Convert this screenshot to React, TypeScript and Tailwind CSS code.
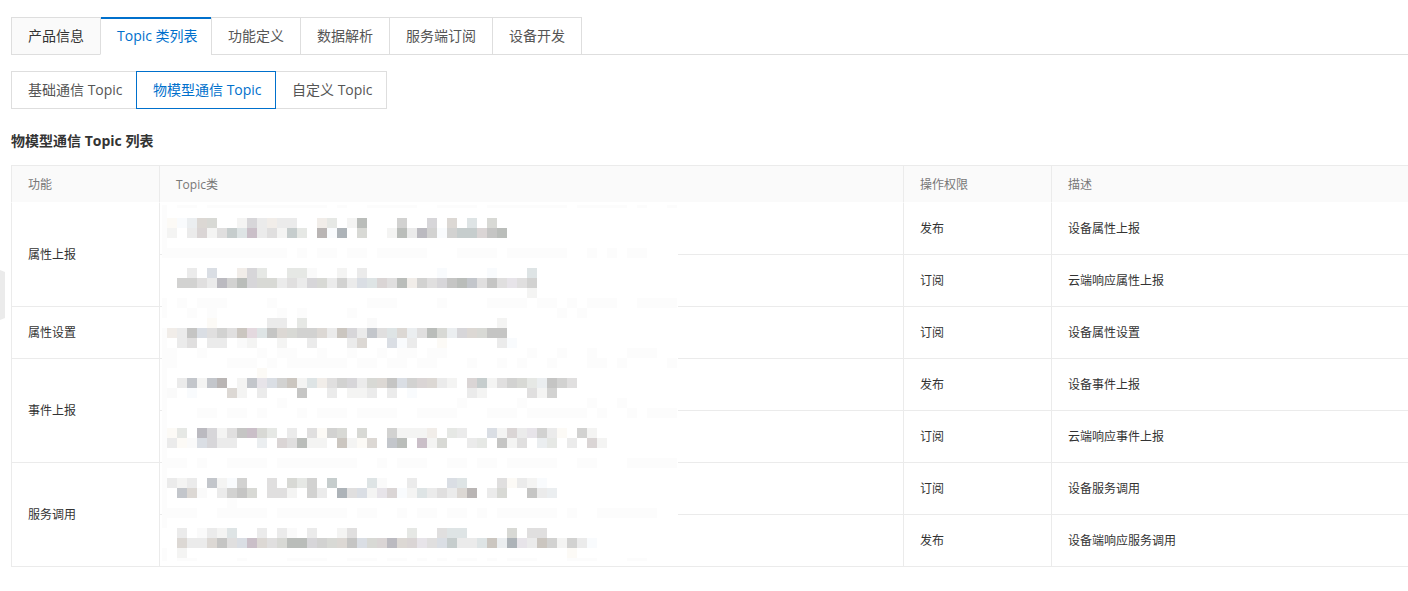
import clsx from "clsx";

const TABS = [
  { label: "产品信息", width: "w-[90px]" },
  { label: "Topic 类列表", width: "w-[110px]" },
  { label: "功能定义", width: "w-[89px]" },
  { label: "数据解析", width: "w-[89px]" },
  { label: "服务端订阅", width: "w-[103px]" },
  { label: "设备开发", width: "w-[90px]" },
];

const SUB_TABS = [
  { label: "基础通信 Topic", width: "w-[125px]" },
  { label: "物模型通信 Topic", width: "w-[140px]" },
  { label: "自定义 Topic", width: "w-[111px]" },
];

type Topic = { perm: string; desc: string };

const GROUPS: { name: string; topics: Topic[] }[] = [
  {
    name: "属性上报",
    topics: [
      { perm: "发布", desc: "设备属性上报" },
      { perm: "订阅", desc: "云端响应属性上报" },
    ],
  },
  { name: "属性设置", topics: [{ perm: "订阅", desc: "设备属性设置" }] },
  {
    name: "事件上报",
    topics: [
      { perm: "发布", desc: "设备事件上报" },
      { perm: "订阅", desc: "云端响应事件上报" },
    ],
  },
  {
    name: "服务调用",
    topics: [
      { perm: "订阅", desc: "设备服务调用" },
      { perm: "发布", desc: "设备端响应服务调用" },
    ],
  },
];

const PALETTE: Record<string, string> = {
  "1": "#fafafa",
  "2": "#f4f4f3",
  "3": "#ebebeb",
  "4": "#e0dfdf",
  "5": "#d2d2d1",
  "6": "#c5c5c4",
  "7": "#b9b5b4",
  b: "#ebeef0",
  n: "#fcfaf6",
  z: "#f9fbfd",
  W: "#f1ede9",
  w: "#dcd8d4",
  k: "#cbc6c0",
  G: "#e6e8e5",
  g: "#d8d9d5",
  h: "#babdba",
  T: "#dee4e5",
  t: "#c6cdcd",
  B: "#dadee4",
  u: "#c3c6cb",
  U: "#adb3b8",
  P: "#e7e4e9",
  p: "#d7d6d9",
  q: "#cabfc8",
  v: "#bbbac0",
  R: "#dad5d5",
  m: "#e4d9df",
};

// [row, cells], one character per 10px cell
const CELLS: [number, string][] = [
  [2, "nzbwg..2p3W33..WG.2h...5..p.w.T.g"],
  [3, "2.3R24tTq342tG.7zU.g..2h3v5z5ttR6h"],
  [7, "..3.B..WpG..GG1..2.3.......z....z...T"],
  [8, ".5543v5hpgg343pg353BTR4hW54p6hu464P45"],
  [9, "....................................2"],
  [12, "....n.....33.G......1............2"],
  [13, "W36B454kmT6wg55w3kp3u4Twb4hgbpwg66"],
  [14, ".34.33.12..2..3...3w..Bz3..n.....3z"],
  [17, ".........n"],
  [18, ".3u2u7.2uPB5k2TW45p3gw6B5Rw32.Rt245gGb654"],
  [19, "1.z...w2.3...6..3.223.3.z.....32....425"],
  [23, "nG.vp246qgG.3.4n5g.g..5222W.G3..B2R3P53n.52"],
  [24, "3n1Bp33..b.R4h22.k2nw.uh.q2g..3G.624.bG.3.R2"],
  [28, "323.u2z5..4.gG5.t...T1..3...BT...4n32z"],
  [29, ".uw1.356g.442.53.U4B2PRz2T343w7.3g..63b"],
  [33, ".3.132T..3.31.3..24.....G..4TT....g.44"],
  [34, ".w33w64Bqw4ghhp5gw6BgRvwRP4Bt33TkbUP3k5253z"],
  [35, ".2......................................n"],
];

// [row, runs], each run is first and last cell
const FAINT: [number, [number, number][]][] = [
  [0, [[1, 2], [4, 15], [17, 17], [20, 24], [27, 30], [32, 39], [41, 45], [47, 47], [50, 50]]],
  [5, [[0, 11], [13, 13], [15, 16], [18, 19], [21, 25], [29, 32], [34, 39], [42, 42], [44, 44], [46, 47]]],
  [10, [[1, 1], [3, 5], [10, 10], [20, 22], [27, 27], [32, 35], [37, 38], [40, 40], [42, 44], [47, 50]]],
  [11, [[2, 2], [4, 4], [11, 11], [13, 13], [18, 18], [39, 39], [41, 41]]],
  [15, [[0, 0], [3, 3], [9, 9], [11, 12], [15, 15], [18, 18], [21, 21], [23, 24], [26, 27], [36, 36], [39, 39], [42, 42], [46, 48]]],
  [16, [[0, 0], [6, 8], [10, 10], [12, 17], [19, 20], [22, 23], [25, 26], [30, 30], [33, 33], [35, 35], [38, 38], [42, 43], [45, 45], [50, 50]]],
  [20, [[11, 11], [29, 29], [35, 35], [42, 42], [45, 45]]],
  [21, [[3, 4], [6, 7], [9, 9], [13, 13], [15, 17], [19, 22], [25, 28], [32, 34], [36, 41], [43, 43], [46, 46], [48, 50]]],
  [26, [[0, 1], [3, 3], [6, 9], [11, 18], [21, 21], [23, 25], [28, 29], [31, 32], [34, 38], [41, 42], [46, 50]]],
  [30, [[6, 6]]],
  [31, [[0, 2], [5, 9], [11, 17], [19, 20], [23, 23], [25, 26], [28, 29], [31, 31], [33, 38], [40, 40], [43, 48]]],
  [36, [[1, 2], [7, 7], [12, 15], [18, 20], [22, 23], [25, 25], [27, 27], [29, 30], [32, 32], [34, 36], [40, 42], [46, 47]]],
];

// first and last row of the half cells along the left edge
const EDGE: [number, number][] = [[0, 5], [10, 11], [13, 32], [35, 36]];

function Mosaic() {
  return (
    <svg
      width={516}
      height={356}
      viewBox="0 0 516 356"
      shapeRendering="crispEdges"
      aria-hidden="true"
      className="absolute left-[151px] top-[40px] bg-white"
    >
      {EDGE.map(([a, b]) => (
        <rect key={a} x={0} y={a * 10 - 7} width={5} height={(b - a + 1) * 10} fill="#fcfcfc" />
      ))}
      {FAINT.map(([row, runs]) =>
        runs.map(([a, b]) => (
          <rect
            key={`${row}-${a}`}
            x={5 + a * 10}
            y={row * 10 - 7}
            width={(b - a + 1) * 10}
            height={10}
            fill="#fcfcfc"
          />
        ))
      )}
      {CELLS.map(([row, cells]) =>
        cells.split("").map((c, i) =>
          c === "." ? null : (
            <rect
              key={`${row}-${i}`}
              x={5 + i * 10}
              y={row * 10 - 7}
              width={10}
              height={10}
              fill={PALETTE[c]}
            />
          )
        )
      )}
    </svg>
  );
}

function Th({ children }: { children: string }) {
  return (
    <th className="h-[38px] border-b border-l border-t border-b-white border-l-[#ebebeb] border-t-[#ebebeb] bg-[#fafafa] px-4 pb-0 pt-0.5 text-left font-normal text-[#777]">
      {children}
    </th>
  );
}

const cell = "h-[52px] border-b border-l border-[#ebebeb] px-4";

export default function App() {
  return (
    <div className="relative bg-white pb-6 pl-[11px] pt-[17px] font-['Open_Sans','Noto_Sans_CJK_SC',sans-serif] text-[#333]">
      <button aria-label="展开" className="absolute left-0 top-[270px] h-[50px] w-[5px]">
        <svg width={5} height={50} viewBox="0 0 5 50" className="block">
          <path d="M0 0 L5 2 V48 L0 50 Z" fill="#ebebeb" />
        </svg>
      </button>

      <nav className="flex h-[38px] border-b border-[#dedede] text-sm">
        {TABS.map((tab, i) => (
          <button
            key={tab.label}
            className={clsx(
              "h-[38px] shrink-0 whitespace-nowrap border-b border-l border-l-[#dedede] pl-4 text-left",
              tab.width,
              i === 1
                ? "border-b-white bg-white text-[#0070cc] shadow-[inset_0_2px_0_#0070cc]"
                : "border-b-[#dedede] border-t border-t-[#dedede]",
              i === 0 && "-mr-px bg-[#fafafa] text-[#333]",
              i === 1 && "w-[111px]",
              i > 1 && "text-[#555]",
              i === TABS.length - 1 && "border-r border-r-[#dedede]"
            )}
          >
            {tab.label}
          </button>
        ))}
      </nav>

      <div className="mt-4 flex text-sm">
        {SUB_TABS.map((tab, i) => (
          <button
            key={tab.label}
            className={clsx(
              "h-[38px] shrink-0 whitespace-nowrap pl-4 text-left",
              tab.width,
              i === 1 ? "border border-[#0070cc] text-[#0070cc]" : "border-y border-[#dedede] text-[#555]",
              i === 0 && "border-l",
              i === SUB_TABS.length - 1 && "border-r"
            )}
          >
            {tab.label}
          </button>
        ))}
      </div>

      <h2 className="mb-3 mt-5 text-sm/6 font-bold">物模型通信 Topic 列表</h2>

      <div className="relative">
        <table className="w-full table-fixed border-separate border-spacing-0 text-xs">
          <colgroup>
            <col className="w-[148px]" />
            <col />
            <col className="w-[148px]" />
            <col className="w-[357px]" />
          </colgroup>
          <thead>
            <tr>
              <Th>功能</Th>
              <Th>Topic类</Th>
              <Th>操作权限</Th>
              <Th>描述</Th>
            </tr>
          </thead>
          <tbody>
            {GROUPS.map((g) =>
              g.topics.map((t, i) => (
                <tr key={t.desc}>
                  {i === 0 && (
                    <td rowSpan={g.topics.length} className={cell}>
                      {g.name}
                    </td>
                  )}
                  <td className={cell} />
                  <td className={cell}>{t.perm}</td>
                  <td className={cell}>{t.desc}</td>
                </tr>
              ))
            )}
          </tbody>
        </table>
        <Mosaic />
      </div>
    </div>
  );
}
